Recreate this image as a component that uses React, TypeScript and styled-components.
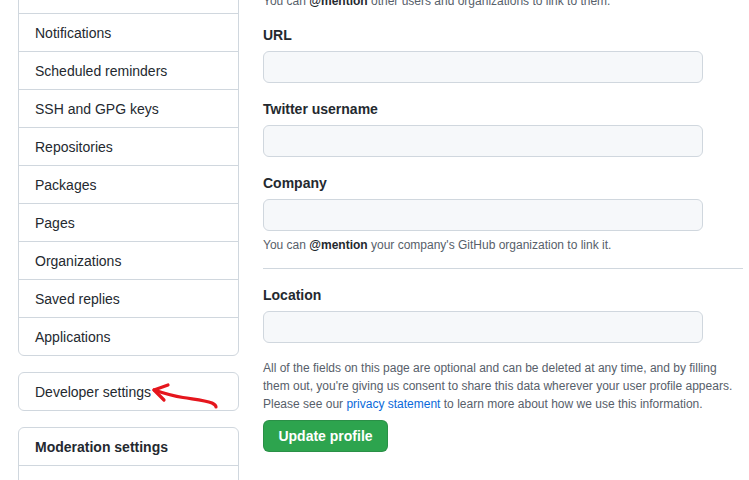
import styled, { createGlobalStyle } from "styled-components";

const GlobalStyle = createGlobalStyle`
  html, body {
    margin: 0;
    padding: 0;
    background: #ffffff;
    overflow: hidden;
  }

  body {
    font-family: "Liberation Sans", Arial, sans-serif;
    font-size: 14px;
    color: #24292f;
  }
`;

const Layout = styled.div`
  display: flex;
  align-items: flex-start;
  gap: 24px;
  padding-left: 18px;
  margin-top: -25px;
`;

const Sidebar = styled.nav`
  display: flex;
  flex-direction: column;
  gap: 16px;
  width: 221px;
  flex-shrink: 0;
`;

const Menu = styled.div`
  position: relative;
  border: 1px solid #d0d7de;
  border-radius: 6px;
  background: #ffffff;
`;

const MenuItem = styled.div<{ $header?: boolean }>`
  height: 37px;
  display: flex;
  align-items: center;
  padding: 0 16px;
  font-size: 14px;
  font-weight: ${(p) => (p.$header ? 600 : 400)};
  color: #24292f;

  & + & {
    border-top: 1px solid #d0d7de;
  }
`;

const MenuBody = styled.div`
  height: 60px;
  border-top: 1px solid #d0d7de;
`;

const Annotation = styled.svg`
  position: absolute;
  left: 130px;
  top: 7px;
  width: 100px;
  height: 34px;
  overflow: visible;
  pointer-events: none;
`;

const Main = styled.main`
  width: 480px;
  padding-top: 17px;
`;

const Note = styled.p`
  margin: 0;
  font-size: 12px;
  line-height: 18px;
  color: #57606a;

  strong {
    color: #24292f;
    font-weight: 600;
  }

  a {
    color: #0969da;
    text-decoration: none;
  }
`;

const FormGroup = styled.div<{ $first?: boolean }>`
  margin-top: ${(p) => (p.$first ? "15px" : "16px")};
`;

const Label = styled.label`
  display: block;
  font-size: 14px;
  font-weight: 600;
  line-height: 20px;
  margin-bottom: 6px;
`;

const Input = styled.input`
  display: block;
  box-sizing: border-box;
  width: 440px;
  height: 32px;
  background: #f6f8fa;
  border: 1px solid #d0d7de;
  border-radius: 6px;
  padding: 5px 12px;
  font: inherit;
  outline: none;
`;

const FieldHint = styled(Note)`
  margin-top: 5px;
`;

const Divider = styled.hr`
  margin: 14px 0 0;
  border: 0;
  border-top: 1px solid #d0d7de;
`;

const Disclaimer = styled(Note)`
  margin-top: 16px;
  width: 480px;
`;

const SubmitButton = styled.button`
  margin-top: 7px;
  height: 32px;
  width: 125px;
  border: 1px solid rgba(27, 31, 36, 0.15);
  border-radius: 6px;
  background: #2da44e;
  color: #ffffff;
  font-family: inherit;
  font-size: 14px;
  font-weight: 700;
  cursor: pointer;
`;

const menuItems = [
  "Emails",
  "Notifications",
  "Scheduled reminders",
  "SSH and GPG keys",
  "Repositories",
  "Packages",
  "Pages",
  "Organizations",
  "Saved replies",
  "Applications",
];

function Field({ label, first }: { label: string; first?: boolean }) {
  return (
    <FormGroup $first={first}>
      <Label>{label}</Label>
      <Input type="text" />
    </FormGroup>
  );
}

export default function App() {
  return (
    <>
      <GlobalStyle />
      <Layout>
        <Sidebar>
          <Menu>
            {menuItems.map((item) => (
              <MenuItem key={item}>{item}</MenuItem>
            ))}
          </Menu>
          <Menu>
            <MenuItem>Developer settings</MenuItem>
            <Annotation viewBox="0 0 100 34">
              <path
                d="M5 10 C 14 13, 24 16, 34 17.5 C 46 19.5, 56 20.5, 63 23 C 66 24.5, 67 26, 67 27"
                fill="none"
                stroke="#e5161d"
                strokeWidth="3.2"
                strokeLinecap="round"
              />
              <path
                d="M19 5 L 5 10 L 15 20"
                fill="none"
                stroke="#e5161d"
                strokeWidth="3.2"
                strokeLinecap="round"
                strokeLinejoin="round"
              />
            </Annotation>
          </Menu>
          <Menu>
            <MenuItem $header>Moderation settings</MenuItem>
            <MenuBody />
          </Menu>
        </Sidebar>

        <Main>
          <Note>
            You can <strong>@mention</strong> other users and organizations to
            link to them.
          </Note>
          <Field label="URL" first />
          <Field label="Twitter username" />
          <Field label="Company" />
          <FieldHint>
            You can <strong>@mention</strong> your company's GitHub organization
            to link it.
          </FieldHint>
          <Divider />
          <Field label="Location" />
          <Disclaimer>
            All of the fields on this page are optional and can be deleted at
            any time, and by filling them out, you're giving us consent to share
            this data wherever your user profile appears. Please see our{" "}
            <a href="#privacy">privacy statement</a> to learn more about how we
            use this information.
          </Disclaimer>
          <SubmitButton type="button">Update profile</SubmitButton>
        </Main>
      </Layout>
    </>
  );
}
